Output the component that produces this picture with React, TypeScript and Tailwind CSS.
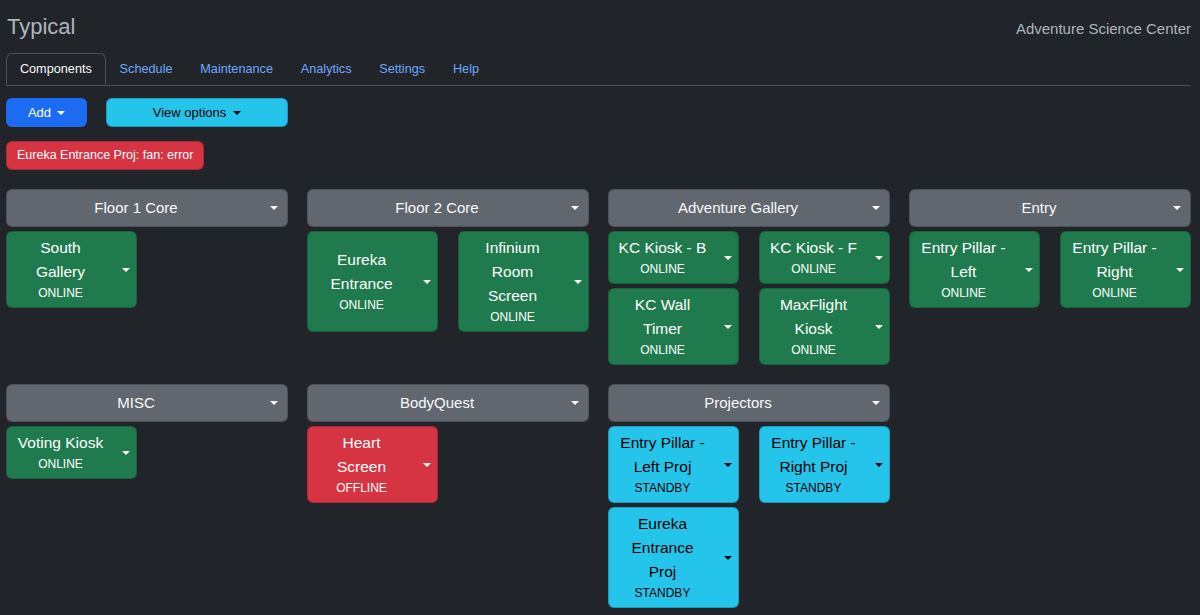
import React from 'react'

type Status = 'ONLINE' | 'OFFLINE' | 'STANDBY'

interface Item {
    name: string;
    status: Status;
}

interface Group {
    title: string;
    items: Item[];
}

const groups: Group[] = [
    { title: 'Floor 1 Core', items: [{ name: 'South Gallery', status: 'ONLINE' }] },
    {
        title: 'Floor 2 Core',
        items: [
            { name: 'Eureka Entrance', status: 'ONLINE' },
            { name: 'Infinium Room Screen', status: 'ONLINE' },
        ],
    },
    {
        title: 'Adventure Gallery',
        items: [
            { name: 'KC Kiosk - B', status: 'ONLINE' },
            { name: 'KC Kiosk - F', status: 'ONLINE' },
            { name: 'KC Wall Timer', status: 'ONLINE' },
            { name: 'MaxFlight Kiosk', status: 'ONLINE' },
        ],
    },
    {
        title: 'Entry',
        items: [
            { name: 'Entry Pillar - Left', status: 'ONLINE' },
            { name: 'Entry Pillar - Right', status: 'ONLINE' },
        ],
    },
    { title: 'MISC', items: [{ name: 'Voting Kiosk', status: 'ONLINE' }] },
    { title: 'BodyQuest', items: [{ name: 'Heart Screen', status: 'OFFLINE' }] },
    {
        title: 'Projectors',
        items: [
            { name: 'Entry Pillar - Left Proj', status: 'STANDBY' },
            { name: 'Entry Pillar - Right Proj', status: 'STANDBY' },
            { name: 'Eureka Entrance Proj', status: 'STANDBY' },
        ],
    },
]

const tabs = ['Components', 'Schedule', 'Maintenance', 'Analytics', 'Settings', 'Help']

function Caret() {
    return (
        <span className="block w-0 h-0 shrink-0 border-l-[4px] border-r-[4px] border-t-[4.5px] border-l-transparent border-r-transparent border-t-current" />
    )
}

const statusStyle: Record<Status, string> = {
    ONLINE: 'bg-[#1f7b4d] text-white',
    OFFLINE: 'bg-[#d63443] text-white',
    STANDBY: 'bg-[#25c5eb] text-black',
}

function Card({ item }: { item: Item }) {
    return (
        <div className={`flex items-center rounded-md border border-black/20 pl-[9px] pr-[6px] py-[4px] ${statusStyle[item.status]}`}>
            <div className="w-[90px] text-center">
                <div className="text-[15.5px] leading-6">{item.name}</div>
                <div className="text-[12px] leading-[19px]">{item.status}</div>
            </div>
            <div className="ml-[17px] flex items-center"><Caret /></div>
        </div>
    )
}

export default function App() {
    return (
        <div className="min-h-screen bg-[#212529] text-[#dee2e6] pl-[6px] pr-[9px] pb-4" style={{ fontFamily: '"Liberation Sans", Arial, sans-serif' }}>
            {/* Header */}
            <div className="flex justify-between items-baseline h-[53px] pt-[14px]">
                <h1 className="text-[22px] leading-[26px] text-[#adb5bd] pl-px">Typical</h1>
                <span className="text-[15px] text-[#adb5bd]">Adventure Science Center</span>
            </div>

            {/* Tabs */}
            <ul className="flex border-b border-[#495057] text-[12.7px]">
                {tabs.map((t, i) => (
                    <li key={t}>
                        <a
                            className={
                                i === 0
                                    ? 'flex items-center h-[32px] pt-px px-[12.9px] -mb-px border border-[#495057] border-b-[#212529] rounded-t-md text-[#f8f9fa] bg-[#212529]'
                                    : 'flex items-center h-[32px] pt-px px-[12.9px] border border-transparent text-[#6ea8fe]'
                            }
                        >
                            {t}
                        </a>
                    </li>
                ))}
            </ul>

            {/* Toolbar */}
            <div className="flex gap-[19px] mt-[12px] text-[13px]">
                <button className="w-[81px] h-[29px] flex items-center justify-center gap-[6px] rounded-md bg-[#1b6cf2] text-white">
                    Add <Caret />
                </button>
                <button className="w-[182px] h-[29px] flex items-center justify-center gap-[7px] rounded-md border border-black/20 bg-[#25c5eb] text-black">
                    View options <Caret />
                </button>
            </div>

            <div className="flex mt-[14px]">
                <div className="flex items-center h-[29px] px-[10px] rounded-md border border-black/20 bg-[#d63443] text-white text-[12.5px]">
                    Eureka Entrance Proj: fan: error
                </div>
            </div>

            {/* Groups */}
            <div className="grid grid-cols-4 gap-x-[19px] gap-y-[19px] mt-[19px] items-start">
                {groups.map(g => (
                    <div key={g.title}>
                        <div className="flex items-center h-[38px] rounded-md border border-black/20 bg-[#60676e] text-[#f8f9fa] pl-[11px] pr-[9px]">
                            <div className="flex-1 text-center text-[15px]">{g.title}</div>
                            <div className="ml-[16px] flex items-center"><Caret /></div>
                        </div>
                        <div className="grid grid-cols-2 gap-x-[20px] gap-y-[4px] mt-[4px]">
                            {g.items.map(it => (
                                <Card key={it.name} item={it} />
                            ))}
                        </div>
                    </div>
                ))}
            </div>
        </div>
    )
}
